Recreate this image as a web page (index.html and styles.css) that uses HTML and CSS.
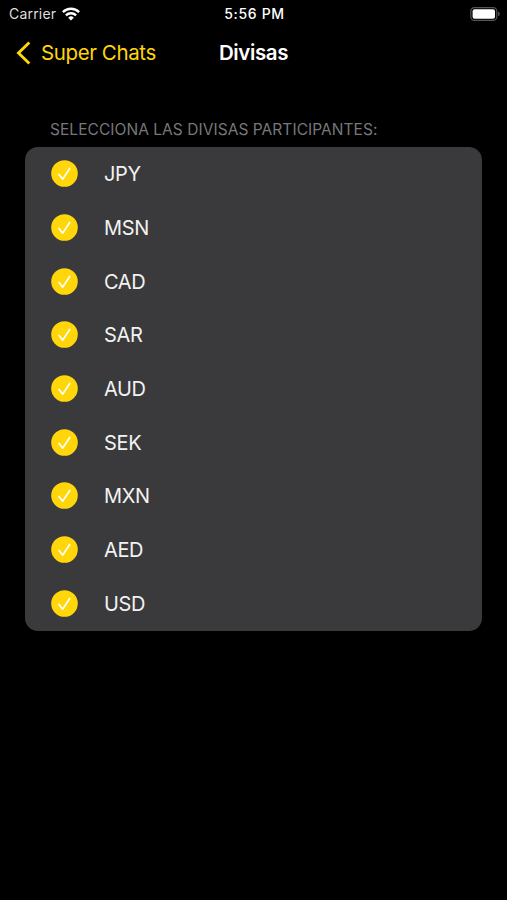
FILE: index.html
```
<!DOCTYPE html>
<html lang="es">
<head>
    <meta charset="UTF-8">
    <meta name="viewport" content="width=device-width, initial-scale=1.0">
    <title>Divisas</title>
    <link rel="stylesheet" href="styles.css">
</head>
<body>
    <svg class="sprite" aria-hidden="true">
        <symbol id="check" viewBox="0 0 27 27">
            <circle cx="13.5" cy="13.5" r="13.3" fill="#ffd60a"/>
            <path d="M8 14.5l3.7 4.6 7-10.6" fill="none" stroke="#fff" stroke-width="1.7" stroke-linecap="round" stroke-linejoin="round"/>
        </symbol>
    </svg>

    <div class="status-bar">
        <div class="carrier">
            <span>Carrier</span>
            <svg class="wifi" viewBox="0 0 18 14" fill="none" stroke="#fff" stroke-width="2.4">
                <path d="M.9 5.1a11.6 11.6 0 0 1 16.2 0"/>
                <path d="M3.9 8.3a7.3 7.3 0 0 1 10.2 0"/>
                <path d="M9 13.6l-2.8-2.9a4 4 0 0 1 5.6 0z" fill="#fff" stroke="none"/>
            </svg>
        </div>
        <span class="time">5:56 PM</span>
        <svg class="battery" viewBox="0 0 30 14">
            <rect x=".8" y=".6" width="26" height="12.8" rx="3.6" fill="none" stroke="#555" stroke-width="1.2"/>
            <rect x="2.6" y="2.3" width="22.4" height="9.4" rx="2" fill="#fff"/>
            <path d="M28 4.8q1.8.6 1.8 2.2t-1.8 2.2z" fill="#555"/>
        </svg>
    </div>

    <header class="nav-bar">
        <a href="#" class="back-button">
            <svg class="chevron" viewBox="0 0 16 24"><path d="M13.3 1.5L2.5 12l10.8 10.5" fill="none" stroke="#ffd60a" stroke-width="2.9"/></svg>
            <span>Super Chats</span>
        </a>
        <h1>Divisas</h1>
    </header>

    <section class="currencies">
        <h2>SELECCIONA LAS DIVISAS PARTICIPANTES:</h2>
        <ul class="currency-list">
            <li><svg class="check"><use href="#check"/></svg><span>JPY</span></li>
            <li><svg class="check"><use href="#check"/></svg><span>MSN</span></li>
            <li><svg class="check"><use href="#check"/></svg><span>CAD</span></li>
            <li><svg class="check"><use href="#check"/></svg><span>SAR</span></li>
            <li><svg class="check"><use href="#check"/></svg><span>AUD</span></li>
            <li><svg class="check"><use href="#check"/></svg><span>SEK</span></li>
            <li><svg class="check"><use href="#check"/></svg><span>MXN</span></li>
            <li><svg class="check"><use href="#check"/></svg><span>AED</span></li>
            <li><svg class="check"><use href="#check"/></svg><span>USD</span></li>
        </ul>
    </section>
</body>
</html>
```
FILE: styles.css
```
* {
    box-sizing: border-box;
}

body {
    font-family: Inter, "Liberation Sans", sans-serif;
    background-color: #000;
    color: #fff;
    margin: 0;
    min-height: 100vh;
}

svg {
    display: block;
    flex: none;
}

.sprite {
    width: 0;
    height: 0;
    position: absolute;
}

.status-bar {
    display: grid;
    grid-template-columns: 1fr auto 1fr;
    align-items: center;
    height: 27px;
    padding: 0 7px 0 9px;
    font-size: 14px;
}

.carrier {
    display: flex;
    align-items: center;
    gap: 6px;
    color: #dedede;
    letter-spacing: 0.2px;
}

.wifi {
    width: 18px;
    height: 14px;
}

.time {
    font-size: 14px;
    font-weight: 500;
    letter-spacing: 0.65px;
}

.battery {
    width: 30px;
    height: 14px;
    justify-self: end;
}

.nav-bar {
    display: grid;
    grid-template-columns: 1fr auto 1fr;
    align-items: center;
    height: 51px;
    padding: 0 16px;
}

.back-button {
    display: flex;
    align-items: center;
    gap: 9px;
    color: #ffd60a;
    font-size: 20.5px;
    letter-spacing: -0.4px;
    text-decoration: none;
    white-space: nowrap;
}

.chevron {
    width: 16px;
    height: 24px;
}

.nav-bar h1 {
    margin: 0;
    font-size: 20.5px;
    font-weight: 600;
    letter-spacing: -0.4px;
}

.currencies {
    padding: 42px 25px 0;
}

.currencies h2 {
    margin: 0 0 7px 25px;
    color: #77777b;
    font-size: 15.5px;
    font-weight: 400;
    line-height: 20px;
    letter-spacing: 0.05px;
}

.currency-list {
    margin: 0;
    padding: 0 0 0.4px;
    list-style: none;
    background-color: #3a3a3c;
    border-radius: 13px;
}

.currency-list li {
    display: flex;
    align-items: center;
    gap: 26px;
    height: 53.7px;
    padding-left: 26px;
    color: #f2f2f2;
    font-size: 20px;
    letter-spacing: -0.35px;
}

.currency-list span {
    padding-top: 1px;
}

.check {
    width: 27px;
    height: 27px;
}
```
